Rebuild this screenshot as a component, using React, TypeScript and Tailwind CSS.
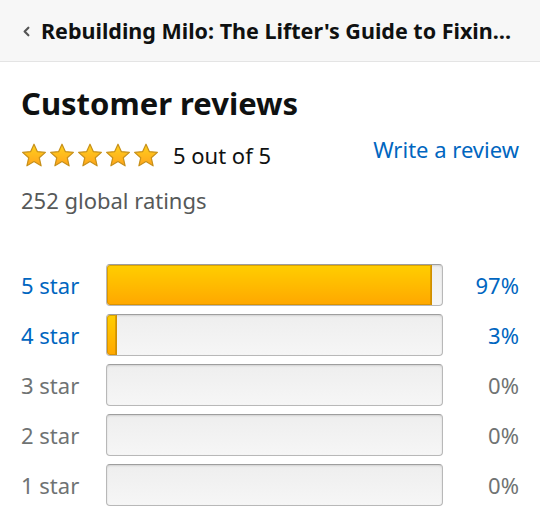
import { ChevronLeft } from 'lucide-react';

const rows = [
  { label: '5 star', pct: 97 },
  { label: '4 star', pct: 3 },
  { label: '3 star', pct: 0 },
  { label: '2 star', pct: 0 },
  { label: '1 star', pct: 0 },
];

function Star() {
  return (
    <svg width="26" height="25" viewBox="0 0 26 25">
      <defs>
        <linearGradient id="sg" x1="0" y1="0" x2="0" y2="1">
          <stop offset="0" stopColor="#ffd21c" />
          <stop offset="1" stopColor="#ffa41c" />
        </linearGradient>
      </defs>
      <path
        d="M13 1.2 L16.3 8.6 L24.4 9.4 L18.3 14.8 L20.1 22.8 L13 18.6 L5.9 22.8 L7.7 14.8 L1.6 9.4 L9.7 8.6 Z"
        fill="url(#sg)"
        stroke="#c7901a"
        strokeWidth="1.2"
        strokeLinejoin="round"
      />
    </svg>
  );
}

export default function App() {
  return (
    <div className="w-[540px] h-[528px] bg-white font-['Noto_Sans',sans-serif] overflow-hidden">
      <header className="h-[62px] bg-[#f7f7f7] border-b border-[#e4e4e4] flex items-center pl-[19px] pr-[21px] gap-[7px]">
        <ChevronLeft size={15} strokeWidth={3.5} className="text-[#555] shrink-0 mt-[1px]" />
        <h1 className="truncate text-[21.5px] font-bold text-[#0f1111] leading-[30px]">
          Rebuilding Milo: The Lifter's Guide to Fixing Common Injuries and Building a Strong Foundation
        </h1>
      </header>

      <main className="px-[21px] pt-[21px]">
        <h2 className="text-[31px] font-bold text-[#0f1111] leading-[40px]">Customer reviews</h2>

        <div className="flex items-start justify-between mt-[15px]">
          <div>
            <div className="flex items-center h-[34px]">
              <div className="flex gap-[2px]">
                {[0, 1, 2, 3, 4].map((i) => (
                  <Star key={i} />
                ))}
              </div>
              <span className="ml-[14px] text-[22px] text-[#0f1111]">5 out of 5</span>
            </div>
            <div className="mt-[14px] text-[22px] text-[#565959] leading-[28px]">252 global ratings</div>
          </div>
          <a className="text-[22px] text-[#0066c0] leading-[28px] mt-[-3px]">Write a review</a>
        </div>

        <div className="mt-[50px] flex flex-col gap-[8px]">
          {rows.map((r) => {
            const active = r.pct > 0;
            return (
              <div key={r.label} className="flex items-center h-[42px]">
                <span
                  className={`w-[85px] text-[22px] ${active ? 'text-[#0066c0]' : 'text-[#6f7373]'}`}
                >
                  {r.label}
                </span>
                <div className="relative w-[337px] h-[42px] rounded-[4px] border border-[#b8b8b8] border-t-[#9e9e9e] bg-gradient-to-b from-[#eeeeee] to-[#f6f6f6] shadow-[inset_0_1px_2px_rgba(0,0,0,0.12)] overflow-hidden">
                  {active && (
                    <div
                      className="h-full rounded-l-[3px] bg-gradient-to-b from-[#ffce00] to-[#ffa700] border-r border-[#d08f00] shadow-[inset_0_0_0_1px_rgba(190,130,0,0.55)]"
                      style={{ width: `${r.pct}%` }}
                    />
                  )}
                </div>
                <span
                  className={`flex-1 text-right text-[22px] ${active ? 'text-[#0066c0]' : 'text-[#6f7373]'}`}
                >
                  {r.pct}%
                </span>
              </div>
            );
          })}
        </div>
      </main>
    </div>
  );
}
